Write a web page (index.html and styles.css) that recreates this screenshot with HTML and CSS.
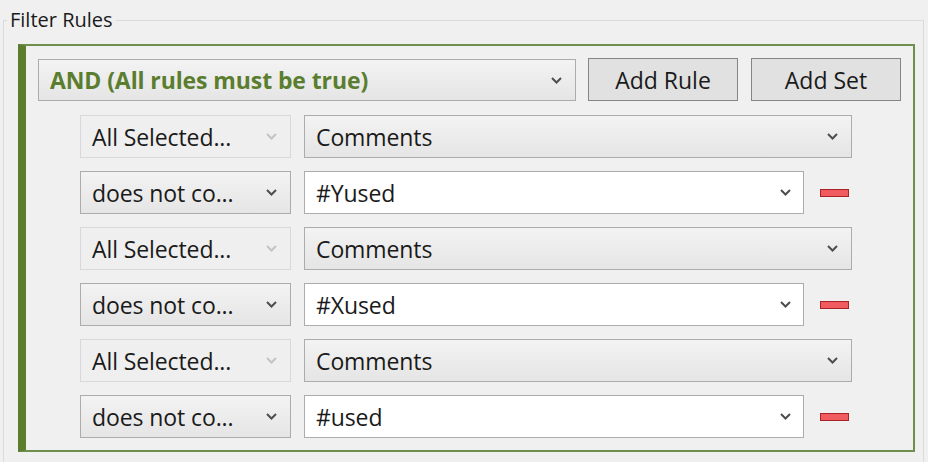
FILE: index.html
```html
<!DOCTYPE html>
<html>
<head>
<meta charset="utf-8">
<link rel="stylesheet" href="styles.css">
</head>
<body>
<fieldset class="groupbox">
  <legend class="group-title">Filter Rules</legend>
  <div class="rule-set">
    <div class="set-header">
      <div class="combo combo-set">
        <span class="combo-text set-text">AND (All rules must be true)</span>
        <svg class="chev" viewBox="0 0 11 7"><polyline points="1,1 5.5,5.5 10,1"/></svg>
      </div>
      <button class="btn">Add Rule</button>
      <button class="btn">Add Set</button>
    </div>
    <div class="rules">
      <div class="rule">
        <div class="combo combo-op disabled"><span class="combo-text">All Selected...</span><svg class="chev" viewBox="0 0 11 7"><polyline points="1,1 5.5,5.5 10,1"/></svg></div>
        <div class="combo combo-field"><span class="combo-text">Comments</span><svg class="chev" viewBox="0 0 11 7"><polyline points="1,1 5.5,5.5 10,1"/></svg></div>
      </div>
      <div class="rule">
        <div class="combo combo-op"><span class="combo-text">does not co...</span><svg class="chev" viewBox="0 0 11 7"><polyline points="1,1 5.5,5.5 10,1"/></svg></div>
        <div class="combo combo-value"><span class="combo-text">#Yused</span><svg class="chev" viewBox="0 0 11 7"><polyline points="1,1 5.5,5.5 10,1"/></svg></div>
        <span class="remove"></span>
      </div>
      <div class="rule">
        <div class="combo combo-op disabled"><span class="combo-text">All Selected...</span><svg class="chev" viewBox="0 0 11 7"><polyline points="1,1 5.5,5.5 10,1"/></svg></div>
        <div class="combo combo-field"><span class="combo-text">Comments</span><svg class="chev" viewBox="0 0 11 7"><polyline points="1,1 5.5,5.5 10,1"/></svg></div>
      </div>
      <div class="rule">
        <div class="combo combo-op"><span class="combo-text">does not co...</span><svg class="chev" viewBox="0 0 11 7"><polyline points="1,1 5.5,5.5 10,1"/></svg></div>
        <div class="combo combo-value"><span class="combo-text">#Xused</span><svg class="chev" viewBox="0 0 11 7"><polyline points="1,1 5.5,5.5 10,1"/></svg></div>
        <span class="remove"></span>
      </div>
      <div class="rule">
        <div class="combo combo-op disabled"><span class="combo-text">All Selected...</span><svg class="chev" viewBox="0 0 11 7"><polyline points="1,1 5.5,5.5 10,1"/></svg></div>
        <div class="combo combo-field"><span class="combo-text">Comments</span><svg class="chev" viewBox="0 0 11 7"><polyline points="1,1 5.5,5.5 10,1"/></svg></div>
      </div>
      <div class="rule">
        <div class="combo combo-op"><span class="combo-text">does not co...</span><svg class="chev" viewBox="0 0 11 7"><polyline points="1,1 5.5,5.5 10,1"/></svg></div>
        <div class="combo combo-value"><span class="combo-text">#used</span><svg class="chev" viewBox="0 0 11 7"><polyline points="1,1 5.5,5.5 10,1"/></svg></div>
        <span class="remove"></span>
      </div>
    </div>
  </div>
</fieldset>
</body>
</html>
```
FILE: styles.css
```css
html, body {
  margin: 0;
  padding: 0;
  background: #f0f0f0;
  font-family: "Open Sans", "Noto Sans", sans-serif;
  color: #1a1a1a;
}

.groupbox {
  box-sizing: border-box;
  width: 921px;
  height: 456px;
  margin: 6px 0 0 3px;
  padding: 10px 0 0 14px;
  border: 1px solid #dadada;
  border-bottom: none;
  min-width: 0;
}

.group-title {
  font-size: 20px;
  line-height: 28px;
  padding: 0 3px;
  margin-left: -11px;
  color: #1a1a1a;
}

.rule-set {
  box-sizing: border-box;
  width: 897px;
  height: 408px;
  border: 2px solid #6f8f4c;
  border-left: 8px solid #5b7e2e;
  padding: 12px 0 12px 12px;
  display: flex;
  flex-direction: column;
  gap: 14px;
}

.set-header {
  display: flex;
  gap: 12px;
  height: 43px;
}

.combo {
  box-sizing: border-box;
  height: 43px;
  display: flex;
  align-items: center;
  justify-content: space-between;
  padding: 0 13px 0 11px;
  border: 1px solid #acacac;
  background: linear-gradient(#f3f3f3, #e5e5e5);
  font-size: 23px;
}

.combo-text {
  white-space: nowrap;
  line-height: 1;
  padding-top: 1px;
  letter-spacing: -0.1px;
}

.chev {
  width: 11px;
  height: 7px;
  flex: none;
  fill: none;
  stroke: #4d4d4d;
  stroke-width: 2;
}

.combo-set {
  width: 538px;
  margin-top: 1px;
  height: 42px;
}

.set-text {
  font-weight: bold;
  color: #5a7d2e;
  font-size: 23px;
  letter-spacing: -0.1px;
}

.btn {
  box-sizing: border-box;
  width: 150px;
  height: 43px;
  border: 1px solid #858585;
  background: #e1e1e1;
  font-family: inherit;
  font-size: 23px;
  color: #1a1a1a;
  padding: 0;
}

.set-header .btn:last-child {
  margin-left: 1px;
}

.rules {
  display: flex;
  flex-direction: column;
  gap: 13px;
  padding-left: 42px;
}

.rule {
  display: flex;
  align-items: center;
  gap: 13px;
  height: 43px;
}

.combo-op {
  width: 211px;
}

.combo-op.disabled {
  background: #efefef;
  border-color: #d9d9d9;
}

.combo-op.disabled .chev {
  stroke: #c4c4c4;
}

.combo-field {
  width: 548px;
}

.combo-value {
  width: 500px;
  background: #ffffff;
  padding-right: 12px;
}

.remove {
  box-sizing: border-box;
  width: 29px;
  height: 8px;
  margin-left: 3px;
  background: #ef5b5e;
  border: 1px solid #a82326;
}
```
